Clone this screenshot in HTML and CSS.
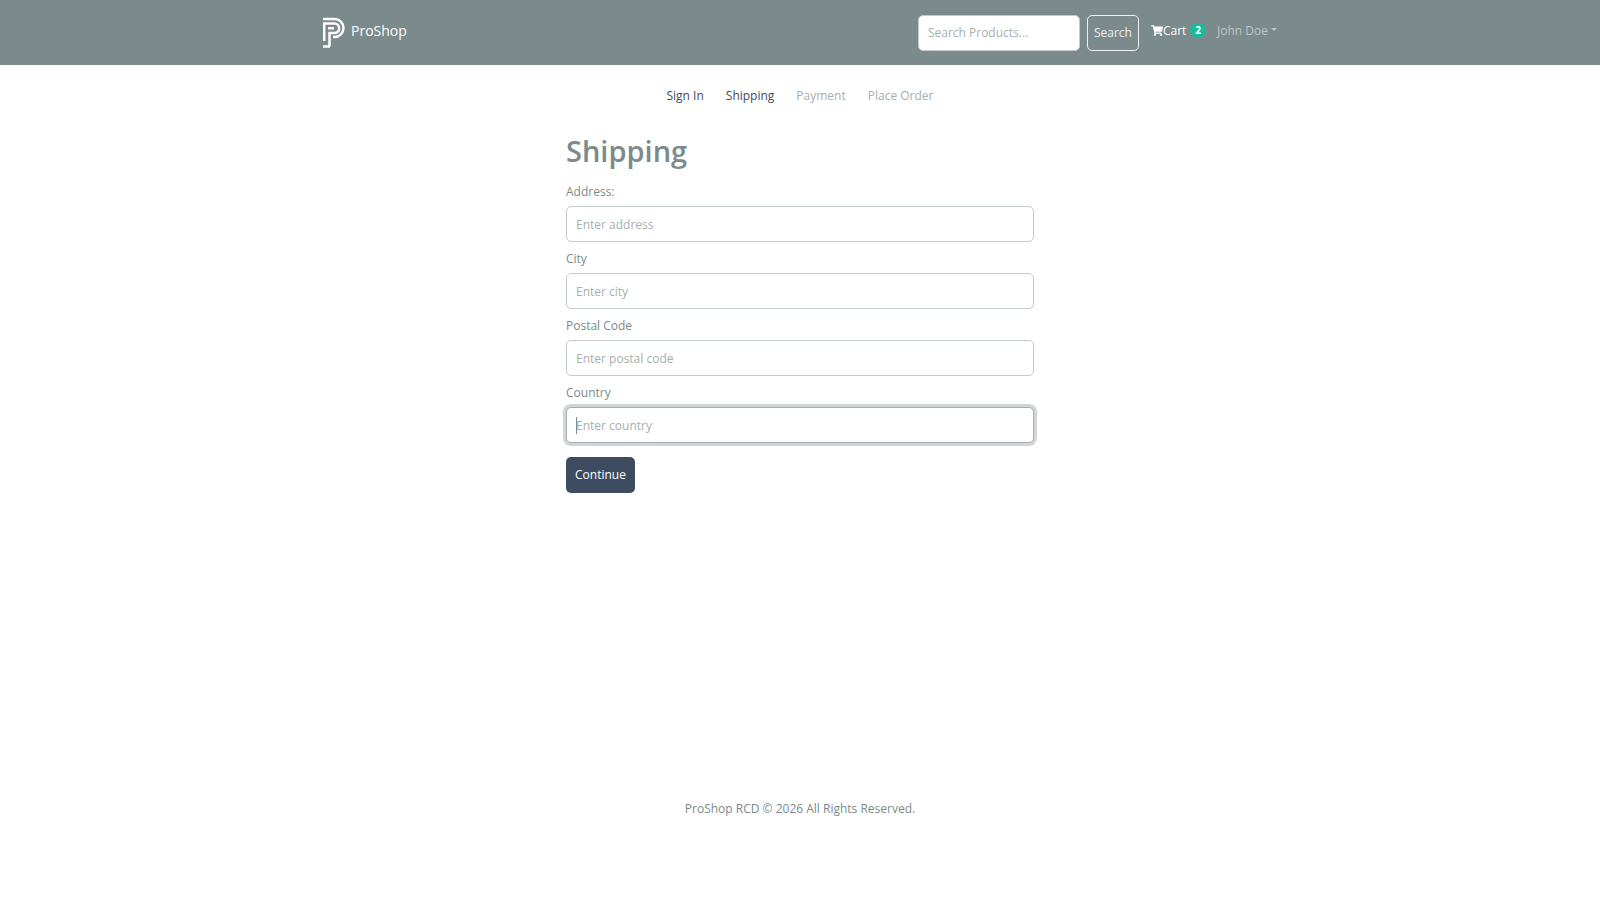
FILE: index.html
```
<!DOCTYPE html>
<html lang="en">
  <head>
    <meta charset="utf-8" />
    <meta name="viewport" content="width=device-width, initial-scale=1" />
    <title>ProShop</title>
    <link rel="stylesheet" href="styles.css" />
  </head>
  <body>
    <header class="navbar">
      <div class="container navbar-inner">
        <a class="brand" href="#">
          <svg class="brand-logo" viewBox="0 0 24 32" fill="none" stroke="currentColor" stroke-width="2.500">
            <path d="M1 2H12.500a9 9 0 0 1 0 18H11" />
            <path d="M2.200 24V6.500H12.500a4.700 4.700 0 0 1 0 9.400H7.500V29.500" />
            <path d="M6 11.200H12M1 29.500H8" />
          </svg>
          <span class="brand-name">ProShop</span>
        </a>
        <nav class="nav">
          <form class="search-form">
            <input class="form-control search-input" type="text" placeholder="Search Products..." aria-label="Search products" />
            <button class="btn btn-outline" type="submit">Search</button>
          </form>
          <a class="nav-link active" href="#">
            <svg class="cart-icon" viewBox="0 0 576 512" fill="currentColor">
              <path d="M528.12 301.319l47.273-208C578.806 78.301 567.391 64 551.990 64H159.208l-9.166-44.810C147.758 8.021 137.930 0 126.529 0H24C10.745 0 0 10.745 0 24v16c0 13.255 10.745 24 24 24h69.883l70.248 343.435C147.325 417.100 136 435.222 136 456c0 30.928 25.072 56 56 56s56-25.072 56-56c0-15.674-6.447-29.835-16.824-40h209.647C430.447 426.165 424 440.326 424 456c0 30.928 25.072 56 56 56s56-25.072 56-56c0-22.172-12.888-41.332-31.579-50.405l5.517-24.276c3.413-15.018-8.002-29.319-23.403-29.319H218.117l-6.545-32h293.145c11.206 0 20.920-7.754 23.403-18.681z" />
            </svg>Cart
            <span class="badge">2</span>
          </a>
          <a class="nav-link dropdown-toggle" href="#">John Doe</a>
        </nav>
      </div>
    </header>

    <main class="container">
      <nav class="steps">
        <a class="step" href="#">Sign In</a>
        <a class="step" href="#">Shipping</a>
        <a class="step disabled" aria-disabled="true">Payment</a>
        <a class="step disabled" aria-disabled="true">Place Order</a>
      </nav>

      <form class="shipping-form">
        <h1>Shipping</h1>
        <div class="form-group">
          <label for="address">Address:</label>
          <input class="form-control" type="text" id="address" placeholder="Enter address" />
        </div>
        <div class="form-group">
          <label for="city">City</label>
          <input class="form-control" type="text" id="city" placeholder="Enter city" />
        </div>
        <div class="form-group">
          <label for="postalCode">Postal Code</label>
          <input class="form-control" type="text" id="postalCode" placeholder="Enter postal code" />
        </div>
        <div class="form-group">
          <label for="country">Country</label>
          <input class="form-control" type="text" id="country" placeholder="Enter country" autofocus />
        </div>
        <button class="btn btn-primary" type="submit">Continue</button>
      </form>
    </main>

    <footer class="footer">ProShop RCD &copy; 2026 All Rights Reserved.</footer>
  </body>
</html>
```

FILE: styles.css
```
:root {
  --primary: #3d4c5e;
  --secondary: #7b8a8b;
  --muted: #a5afaf;
  --border: #c3cbcd;
  --success: #18bc9c;
}

* {
  box-sizing: border-box;
}

body {
  margin: 0;
  background-color: #fff;
  color: var(--secondary);
  font-family: "Segoe UI", "Open Sans", sans-serif;
  font-size: 12px;
  line-height: 18px;
}

a {
  color: inherit;
  text-decoration: none;
}

.container {
  max-width: 984px;
  margin: 0 auto;
  padding: 0 12px;
}

.navbar {
  background-color: var(--secondary);
  color: #fff;
}

.navbar-inner {
  display: flex;
  align-items: center;
  justify-content: space-between;
  min-height: 65px;
}

.brand {
  display: flex;
  align-items: center;
  gap: 5px;
  padding-left: 2px;
  font-size: 14px;
}

.brand-logo {
  width: 24px;
  height: 32px;
}

.brand-name {
  padding-bottom: 3px;
}

.nav,
.search-form {
  display: flex;
}

.search-form {
  gap: 7px;
  margin-right: 6px;
}

.nav-link {
  display: flex;
  align-items: center;
  height: 32px;
  padding: 0 6px;
  color: #bdc5c5;
}

.nav-link.active {
  color: #fff;
}

.cart-icon {
  width: 12px;
  height: 11px;
}

.badge {
  margin-left: 4px;
  padding: 3px 5px;
  border-radius: 8px;
  background-color: var(--success);
  font-size: 10px;
  font-weight: 700;
  line-height: 9px;
}

.dropdown-toggle {
  padding: 0 3px 0 5px;
}

.dropdown-toggle::after {
  content: "";
  margin: 0 0 3px 3px;
  border-top: 3px solid;
  border-right: 3px solid transparent;
  border-left: 3px solid transparent;
}

.form-control {
  display: block;
  width: 100%;
  height: 36px;
  padding: 8px 9px;
  border: 1px solid var(--border);
  border-radius: 5px;
  background-color: #fff;
  color: var(--secondary);
  font: inherit;
}

.form-control::placeholder {
  color: var(--muted);
  opacity: 1;
}

.form-control:focus {
  border-color: #a8afb9;
  outline: 0;
  box-shadow: 0 0 0 3px #d1d5d9;
}

/* steady caret while the field is empty */
.form-control:focus:placeholder-shown {
  background: linear-gradient(var(--secondary), var(--secondary)) 9px center / 1px 17px no-repeat #fff;
  caret-color: transparent;
}

.search-form .search-input {
  width: 162px;
}

.btn {
  height: 36px;
  padding: 0 8px;
  border: 1px solid transparent;
  border-radius: 5px;
  font: inherit;
  cursor: pointer;
}

.btn-outline {
  padding: 0 6px;
  border-color: #ecf0f1;
  background: none;
  color: #ecf0f1;
}

.btn-primary {
  margin-top: 6px;
  background-color: var(--primary);
  color: #fff;
}

.steps {
  display: flex;
  justify-content: center;
  gap: 22px;
  padding: 22px 0 21px;
  color: var(--primary);
}

.step.disabled {
  color: var(--muted);
}

.shipping-form {
  max-width: 468px;
  margin: 0 auto;
}

h1 {
  margin: 5px 0 12px;
  font-size: 29px;
  font-weight: 600;
  line-height: 40px;
}

.form-group {
  margin-bottom: 8px;
}

label {
  display: block;
  margin-bottom: 5px;
}

.footer {
  margin-top: 307px;
  text-align: center;
}
```
